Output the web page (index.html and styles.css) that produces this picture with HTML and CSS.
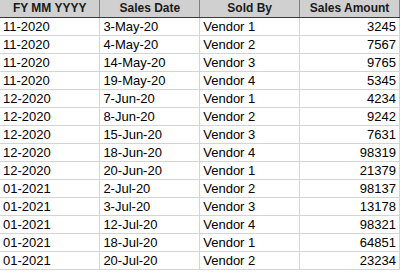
FILE: index.html
```html
<!DOCTYPE html>
<html>
<head>
<meta charset="utf-8">
<link rel="stylesheet" href="styles.css">
</head>
<body>
<table class="sheet">
  <thead>
    <tr><th>FY MM YYYY</th><th>Sales Date</th><th>Sold By</th><th>Sales Amount</th></tr>
  </thead>
  <tbody>
    <tr><td>11-2020</td><td>3-May-20</td><td>Vendor 1</td><td class="num">3245</td></tr>
    <tr><td>11-2020</td><td>4-May-20</td><td>Vendor 2</td><td class="num">7567</td></tr>
    <tr><td>11-2020</td><td>14-May-20</td><td>Vendor 3</td><td class="num">9765</td></tr>
    <tr><td>11-2020</td><td>19-May-20</td><td>Vendor 4</td><td class="num">5345</td></tr>
    <tr><td>12-2020</td><td>7-Jun-20</td><td>Vendor 1</td><td class="num">4234</td></tr>
    <tr><td>12-2020</td><td>8-Jun-20</td><td>Vendor 2</td><td class="num">9242</td></tr>
    <tr><td>12-2020</td><td>15-Jun-20</td><td>Vendor 3</td><td class="num">7631</td></tr>
    <tr><td>12-2020</td><td>18-Jun-20</td><td>Vendor 4</td><td class="num">98319</td></tr>
    <tr><td>12-2020</td><td>20-Jun-20</td><td>Vendor 1</td><td class="num">21379</td></tr>
    <tr><td>01-2021</td><td>2-Jul-20</td><td>Vendor 2</td><td class="num">98137</td></tr>
    <tr><td>01-2021</td><td>3-Jul-20</td><td>Vendor 3</td><td class="num">13178</td></tr>
    <tr><td>01-2021</td><td>12-Jul-20</td><td>Vendor 4</td><td class="num">98321</td></tr>
    <tr><td>01-2021</td><td>18-Jul-20</td><td>Vendor 1</td><td class="num">64851</td></tr>
    <tr><td>01-2021</td><td>20-Jul-20</td><td>Vendor 2</td><td class="num">23234</td></tr>
  </tbody>
</table>
</body>
</html>
```
FILE: styles.css
```css
html, body {
  margin: 0;
  padding: 0;
  background: #ffffff;
}
.sheet {
  border-collapse: collapse;
  table-layout: fixed;
  width: 400px;
  font-family: "Liberation Sans", Arial, sans-serif;
  font-size: 13px;
  color: #000;
}
.sheet th, .sheet td {
  width: 99px;
  height: 17px;
  padding: 0 3px;
  box-sizing: border-box;
  white-space: nowrap;
  overflow: hidden;
  line-height: 17px;
}
.sheet th {
  background: #d0d0d0;
  font-size: 12px;
  font-weight: bold;
  text-align: center;
  border-right: 1px solid #7f7f7f;
  border-bottom: 1px solid #3a3a3a;
  color: #1a1a1a;
}
.sheet td {
  border-right: 1px solid #d4d4d4;
  border-bottom: 1px solid #d4d4d4;
  text-align: left;
}
.sheet .num {
  text-align: right;
}
```
